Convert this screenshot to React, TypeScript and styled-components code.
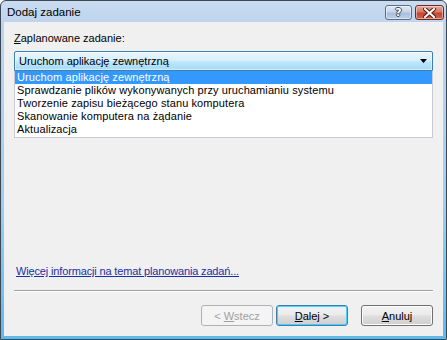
import React from 'react';
import styled, { createGlobalStyle } from 'styled-components';

const GlobalStyle = createGlobalStyle`
  html, body {
    margin: 0;
    padding: 0;
    background: #ffffff;
  }
  body {
    font-family: 'Liberation Sans', Arial, sans-serif;
    font-size: 11px;
  }
`;

const Window = styled.div`
  box-sizing: border-box;
  width: 447px;
  height: 340px;
  display: flex;
  flex-direction: column;
  border: 1px solid #3c4855;
  border-radius: 6px 6px 0 0;
  background: linear-gradient(to bottom, #c9dcf1 0, #bdd4ed 22px, #a3cdec 200px, #5bbbe8 100%);
  overflow: hidden;
`;

const TitleBar = styled.div`
  height: 21px;
  display: flex;
  align-items: center;
  padding: 0 2px 0 6px;
  flex-shrink: 0;
`;

const Title = styled.div`
  flex: 1;
  font-size: 11.5px;
  color: #000;
  padding-top: 1px;
`;

const CaptionButton = styled.div<{ $close?: boolean }>`
  box-sizing: border-box;
  width: ${(p) => (p.$close ? 29 : 27)}px;
  height: 15px;
  margin-left: ${(p) => (p.$close ? 3 : 0)}px;
  margin-top: 2px;
  border: 1px solid ${(p) => (p.$close ? '#6e2a22' : '#5b6f86')};
  border-radius: 3px;
  display: flex;
  align-items: center;
  justify-content: center;
  background: ${(p) =>
    p.$close
      ? 'linear-gradient(to bottom, #e8a597 0, #d77a66 45%, #c2452f 55%, #d0654c 100%)'
      : 'linear-gradient(to bottom, #dfe9f5 0, #c5d6ea 45%, #a9bfda 55%, #bcd0e8 100%)'};
  box-shadow: inset 0 0 0 1px rgba(255, 255, 255, 0.45);
`;

const HelpGlyph = styled.span`
  font-family: 'DejaVu Sans', sans-serif;
  font-weight: bold;
  font-size: 11px;
  line-height: 11px;
  color: #ffffff;
  text-shadow: 0 0 1px #3d4f66, 1px 0 0 #3d4f66, -1px 0 0 #3d4f66, 0 1px 0 #3d4f66, 0 -1px 0 #3d4f66;
`;

const Body = styled.div`
  flex: 1;
  margin: 0 3px 3px 3px;
  background: #f0f0f0;
  display: flex;
  flex-direction: column;
  padding: 10px 10px 10px 10px;
`;

const Label = styled.div`
  line-height: 13px;
  color: #000;
  margin-bottom: 6px;
`;

const Mnemonic = styled.span`
  text-decoration: underline;
`;

const Combo = styled.div`
  box-sizing: border-box;
  height: 20px;
  display: flex;
  align-items: center;
  padding: 0 5px 0 4px;
  border: 1px solid #3c7fb1;
  border-radius: 2px 2px 0 0;
  background: linear-gradient(to bottom, #eaf6fd 0, #d9f0fc 45%, #bee6fd 55%, #a7d9f5 100%);
  box-shadow: inset 0 0 0 1px rgba(255, 255, 255, 0.5);
`;

const ComboText = styled.div`
  flex: 1;
  color: #000;
`;

const List = styled.div`
  box-sizing: border-box;
  background: #ffffff;
  border: 1px solid #c9c9d4;
  border-top: none;
  padding-bottom: 1px;
`;

const Row = styled.div<{ $selected?: boolean }>`
  height: 13px;
  line-height: 13px;
  padding-left: 2px;
  white-space: nowrap;
  letter-spacing: 0.1px;
  color: ${(p) => (p.$selected ? '#ffffff' : '#000000')};
  background: ${(p) => (p.$selected ? '#3399ff' : 'transparent')};
`;

const Spacer = styled.div`
  flex: 1;
`;

const Link = styled.a`
  color: #1a2ea8;
  text-decoration: underline;
  line-height: 13px;
  letter-spacing: -0.15px;
  align-self: flex-start;
  margin-bottom: 12px;
  margin-left: 2px;
`;

const Separator = styled.div`
  height: 1px;
  background: #a0a0a0;
  border-bottom: 1px solid #ffffff;
  margin-bottom: 13px;
`;

const ButtonRow = styled.div`
  display: flex;
  justify-content: flex-end;
  gap: 3px;
`;

const Button = styled.button<{ $default?: boolean; $gapLeft?: number }>`
  box-sizing: border-box;
  width: 72px;
  height: 21px;
  margin-left: ${(p) => p.$gapLeft ?? 0}px;
  padding: 0;
  font-family: 'Liberation Sans', Arial, sans-serif;
  font-size: 11px;
  color: #000;
  border: 1px solid ${(p) => (p.$default ? '#3c7fb1' : '#707070')};
  border-radius: 3px;
  background: linear-gradient(to bottom, #f2f2f2 0, #ebebeb 45%, #dddddd 55%, #cfcfcf 100%);
  box-shadow: ${(p) => (p.$default ? 'inset 0 0 0 1px #48d0fc' : 'inset 0 0 0 1px #fcfcfc')};

  &:disabled {
    color: #a0a0a0;
    border-color: #adb2b5;
    background: #f4f4f4;
    box-shadow: none;
  }
`;

const items = [
  'Uruchom aplikację zewnętrzną',
  'Sprawdzanie plików wykonywanych przy uruchamianiu systemu',
  'Tworzenie zapisu bieżącego stanu komputera',
  'Skanowanie komputera na żądanie',
  'Aktualizacja',
];

export default function App() {
  return (
    <>
      <GlobalStyle />
      <Window>
        <TitleBar>
          <Title>Dodaj zadanie</Title>
          <CaptionButton>
            <HelpGlyph>?</HelpGlyph>
          </CaptionButton>
          <CaptionButton $close>
            <svg width="13" height="10" viewBox="0 0 13 10">
              <path d="M2 1 L11 9 M11 1 L2 9" stroke="#5a1d14" strokeWidth="4" strokeLinecap="square" />
              <path d="M2 1 L11 9 M11 1 L2 9" stroke="#ffffff" strokeWidth="2" strokeLinecap="square" />
            </svg>
          </CaptionButton>
        </TitleBar>
        <Body>
          <Label>
            <Mnemonic>Z</Mnemonic>aplanowane zadanie:
          </Label>
          <Combo>
            <ComboText>Uruchom aplikację zewnętrzną</ComboText>
            <svg width="7" height="4" viewBox="0 0 7 4">
              <path d="M0 0 H7 L3.5 4 Z" fill="#000" />
            </svg>
          </Combo>
          <List>
            {items.map((t, i) => (
              <Row key={t} $selected={i === 0}>
                {t}
              </Row>
            ))}
          </List>
          <Spacer />
          <Link href="#">Więcej informacji na temat planowania zadań...</Link>
          <Separator />
          <ButtonRow>
            <Button disabled>
              &lt; <Mnemonic>W</Mnemonic>stecz
            </Button>
            <Button $default>
              <Mnemonic>D</Mnemonic>alej &gt;
            </Button>
            <Button $gapLeft={10}>
              <Mnemonic>A</Mnemonic>nuluj
            </Button>
          </ButtonRow>
        </Body>
      </Window>
    </>
  );
}
